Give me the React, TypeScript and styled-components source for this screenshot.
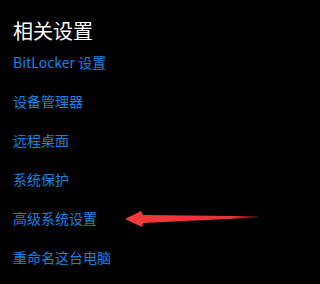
import React from "react";
import styled, { createGlobalStyle } from "styled-components";

const Global = createGlobalStyle`
  html, body { margin: 0; padding: 0; background: #000; }
  body { font-family: "Noto Sans CJK SC", "Noto Sans", sans-serif; }
`;

const Page = styled.div`
  position: relative;
  width: 294px;
  height: 284px;
  background: #000;
  padding: 18px 0 0 13px;
  box-sizing: border-box;
  overflow: hidden;
`;

const Title = styled.h2`
  margin: 0;
  font-size: 20px;
  line-height: 25px;
  font-weight: 400;
  color: #ffffff;
`;

const List = styled.div`
  display: flex;
  flex-direction: column;
`;

const Link = styled.a`
  display: block;
  height: 39px;
  line-height: 39px;
  font-size: 14px;
  color: #1383e0;
  text-decoration: none;
  white-space: nowrap;
`;

const Arrow = styled.svg`
  position: absolute;
  left: 120px;
  top: 205px;
  width: 145px;
  height: 30px;
`;

const items = [
  "BitLocker 设置",
  "设备管理器",
  "远程桌面",
  "系统保护",
  "高级系统设置",
  "重命名这台电脑",
];

export default function App() {
  return (
    <>
      <Global />
      <Page>
        <Title>相关设置</Title>
        <List>
          {items.map((t) => (
            <Link key={t}>{t}</Link>
          ))}
        </List>
        <Arrow viewBox="120 205 145 30">
          <defs>
            <linearGradient id="fade" x1="125" y1="0" x2="260" y2="0" gradientUnits="userSpaceOnUse">
              <stop offset="0" stopColor="#f2393b" />
              <stop offset="0.8" stopColor="#e8333a" />
              <stop offset="1" stopColor="#3a0a0a" />
            </linearGradient>
          </defs>
          <polygon
            points="125,219 141,211 143,215 258,216.2 258,217.6 143,223 142,227"
            fill="url(#fade)"
          />
        </Arrow>
      </Page>
    </>
  );
}
